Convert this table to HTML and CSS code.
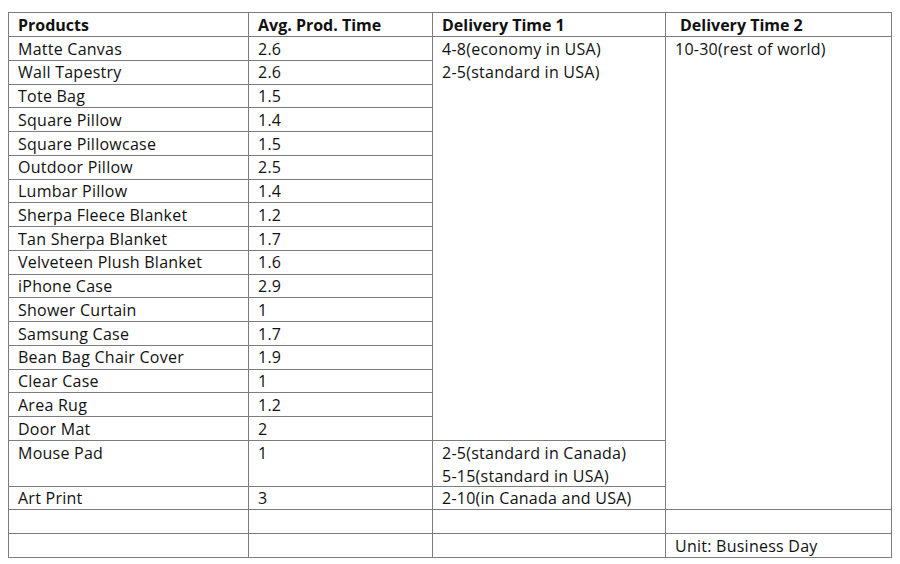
FILE: index.html
```html
<!DOCTYPE html>
<html>
<head>
<meta charset="utf-8">
<link rel="stylesheet" href="styles.css">
</head>
<body>
<table class="grid">
<colgroup>
<col class="c1"><col class="c2"><col class="c3"><col class="c4">
</colgroup>
<thead>
<tr><th>Products</th><th>Avg. Prod. Time</th><th>Delivery Time 1</th><th class="sp">Delivery Time 2</th></tr>
</thead>
<tbody>
<tr><td>Matte Canvas</td><td>2.6</td><td rowspan="17"><div class="ln">4-8(economy in USA)</div><div class="ln">2-5(standard in USA)</div></td><td rowspan="19">10-30(rest of world)</td></tr>
<tr><td>Wall Tapestry</td><td>2.6</td></tr>
<tr><td>Tote Bag</td><td>1.5</td></tr>
<tr><td>Square Pillow</td><td>1.4</td></tr>
<tr><td>Square Pillowcase</td><td>1.5</td></tr>
<tr><td>Outdoor Pillow</td><td>2.5</td></tr>
<tr><td>Lumbar Pillow</td><td>1.4</td></tr>
<tr><td>Sherpa Fleece Blanket</td><td>1.2</td></tr>
<tr><td>Tan Sherpa Blanket</td><td>1.7</td></tr>
<tr><td>Velveteen Plush Blanket</td><td>1.6</td></tr>
<tr><td>iPhone Case</td><td>2.9</td></tr>
<tr><td>Shower Curtain</td><td>1</td></tr>
<tr><td>Samsung Case</td><td>1.7</td></tr>
<tr><td>Bean Bag Chair Cover</td><td>1.9</td></tr>
<tr><td>Clear Case</td><td>1</td></tr>
<tr><td>Area Rug</td><td>1.2</td></tr>
<tr><td>Door Mat</td><td>2</td></tr>
<tr class="tall"><td>Mouse Pad</td><td>1</td><td><div class="ln">2-5(standard in Canada)</div><div class="ln">5-15(standard in USA)</div></td></tr>
<tr><td>Art Print</td><td>3</td><td>2-10(in Canada and USA)</td></tr>
<tr><td></td><td></td><td></td><td></td></tr>
<tr><td></td><td></td><td></td><td>Unit: Business Day</td></tr>
</tbody>
</table>
</body>
</html>
```
FILE: styles.css
```css
html, body {
  margin: 0;
  padding: 0;
  background: #ffffff;
}
body {
  padding: 12px 0 0 8px;
  font-family: "Open Sans", Lato, sans-serif;
  color: #111111;
}
.grid {
  border-collapse: collapse;
  table-layout: fixed;
  width: 883px;
  font-size: 16px;
  letter-spacing: 0.25px;
  line-height: 21.26px;
}
.c1 { width: 240px; }
.c2 { width: 184px; }
.c3 { width: 233px; }
.c4 { width: 226px; }
.grid th, .grid td {
  border: 1px solid #7d7d7d;
  padding: 1.5px 0 0 9px;
  height: 21.26px;
  text-align: left;
  vertical-align: top;
  white-space: nowrap;
  overflow: hidden;
}
.grid th {
  font-weight: 700;
  letter-spacing: 0;
  height: 21.5px;
}
.grid th.sp {
  padding-left: 14px;
}
.grid .ln {
  height: 23.76px;
}
.grid tr.tall td {
  height: 43.2px;
}
.grid tr.tall .ln:last-child {
  height: 19px;
}
```
